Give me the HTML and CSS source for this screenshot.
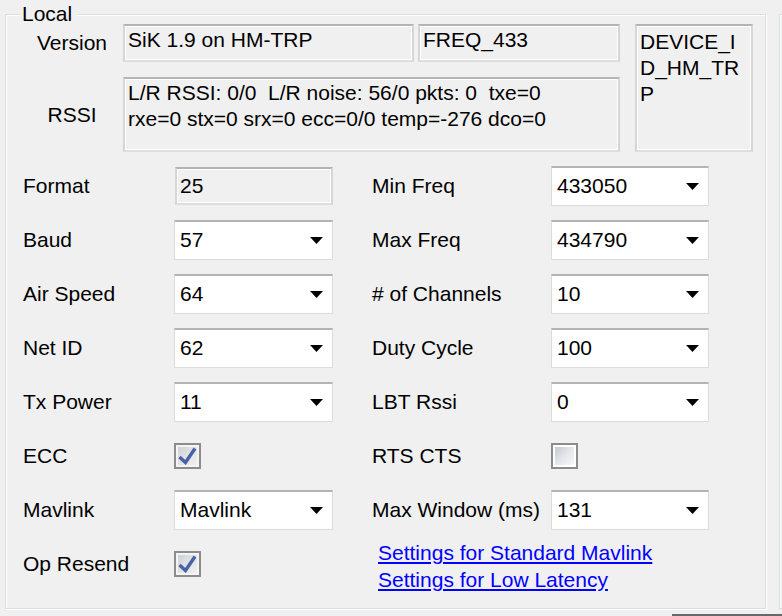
FILE: index.html
```html
<!DOCTYPE html>
<html>
<head>
<meta charset="utf-8">
<link rel="stylesheet" href="styles.css">
</head>
<body>
<div class="window">
  <div class="group local">
    <span class="legend">Local</span>
    <div class="info">
      <div class="info-label">Version</div>
      <div class="tb ver-val">SiK 1.9 on HM-TRP</div>
      <div class="tb freq-val">FREQ_433</div>
      <div class="tb dev-val">DEVICE_I<br>D_HM_TR<br>P</div>
      <div class="info-label">RSSI</div>
      <div class="tb rssi-val">L/R RSSI: 0/0&nbsp; L/R noise: 56/0 pkts: 0&nbsp; txe=0<br>rxe=0 stx=0 srx=0 ecc=0/0 temp=-276 dco=0</div>
    </div>
    <div class="settings">
      <div class="lbl">Format</div>
      <div class="ro">25</div>
      <div class="lbl rlbl">Min Freq</div>
      <div class="combo rc"><span>433050</span><svg class="arr" width="13" height="7" viewBox="0 0 13 7"><polygon points="0,0 13,0 6.5,7" fill="#000"/></svg></div>

      <div class="lbl">Baud</div>
      <div class="combo"><span>57</span><svg class="arr" width="13" height="7" viewBox="0 0 13 7"><polygon points="0,0 13,0 6.5,7" fill="#000"/></svg></div>
      <div class="lbl rlbl">Max Freq</div>
      <div class="combo rc"><span>434790</span><svg class="arr" width="13" height="7" viewBox="0 0 13 7"><polygon points="0,0 13,0 6.5,7" fill="#000"/></svg></div>

      <div class="lbl">Air Speed</div>
      <div class="combo"><span>64</span><svg class="arr" width="13" height="7" viewBox="0 0 13 7"><polygon points="0,0 13,0 6.5,7" fill="#000"/></svg></div>
      <div class="lbl rlbl"># of Channels</div>
      <div class="combo rc"><span>10</span><svg class="arr" width="13" height="7" viewBox="0 0 13 7"><polygon points="0,0 13,0 6.5,7" fill="#000"/></svg></div>

      <div class="lbl">Net ID</div>
      <div class="combo"><span>62</span><svg class="arr" width="13" height="7" viewBox="0 0 13 7"><polygon points="0,0 13,0 6.5,7" fill="#000"/></svg></div>
      <div class="lbl rlbl">Duty Cycle</div>
      <div class="combo rc"><span>100</span><svg class="arr" width="13" height="7" viewBox="0 0 13 7"><polygon points="0,0 13,0 6.5,7" fill="#000"/></svg></div>

      <div class="lbl">Tx Power</div>
      <div class="combo"><span>11</span><svg class="arr" width="13" height="7" viewBox="0 0 13 7"><polygon points="0,0 13,0 6.5,7" fill="#000"/></svg></div>
      <div class="lbl rlbl">LBT Rssi</div>
      <div class="combo rc"><span>0</span><svg class="arr" width="13" height="7" viewBox="0 0 13 7"><polygon points="0,0 13,0 6.5,7" fill="#000"/></svg></div>

      <div class="lbl">ECC</div>
      <div class="chk checked"><svg width="19" height="18" viewBox="0 0 19 18"><polyline points="1.5,10 7.5,15.5 17,1.5" fill="none" stroke="#4862a6" stroke-width="3.4"/></svg></div>
      <div class="lbl rlbl">RTS CTS</div>
      <div class="chk"></div>

      <div class="lbl">Mavlink</div>
      <div class="combo"><span>Mavlink</span><svg class="arr" width="13" height="7" viewBox="0 0 13 7"><polygon points="0,0 13,0 6.5,7" fill="#000"/></svg></div>
      <div class="lbl rlbl">Max Window (ms)</div>
      <div class="combo rc"><span>131</span><svg class="arr" width="13" height="7" viewBox="0 0 13 7"><polygon points="0,0 13,0 6.5,7" fill="#000"/></svg></div>

      <div class="lbl">Op Resend</div>
      <div class="chk checked"><svg width="19" height="18" viewBox="0 0 19 18"><polyline points="1.5,10 7.5,15.5 17,1.5" fill="none" stroke="#4862a6" stroke-width="3.4"/></svg></div>
      <div class="links">
        <a href="#">Settings for Standard Mavlink</a>
        <a href="#">Settings for Low Latency</a>
      </div>
    </div>
  </div>
  <div class="group next"></div>
</div>
<div class="bottom-bar"></div>
</body>
</html>
```

FILE: styles.css
```css
html, body {
  margin: 0;
  padding: 0;
}
body {
  width: 782px;
  height: 616px;
  overflow: hidden;
  background: #f0f0f0;
  font-family: "Liberation Sans", Arial, sans-serif;
  font-size: 21px;
  color: #000;
}
.window {
  display: flex;
  align-items: flex-start;
}
.group {
  box-sizing: border-box;
  margin-top: 14px;
  height: 595px;
  border: 1px solid #d5dfe5;
  box-shadow: inset 1px 1px 0 #fff, 1px 1px 0 #fff;
  position: relative;
  flex: none;
}
.local {
  margin-left: 5px;
  width: 761px;
}
.next {
  margin-left: 13px;
  width: 3px;
  border-right: none;
  box-shadow: inset 1px 1px 0 #fff;
}
.legend {
  position: absolute;
  left: 14px;
  top: -13px;
  padding: 0 5px 0 2px;
  line-height: 24px;
  background: #f0f0f0;
}
.info {
  display: grid;
  grid-template-columns: 95px 295px 217px 118px;
  grid-template-rows: 38px 75px;
  row-gap: 15px;
  margin: 9px 0 0 22px;
}
.info-label {
  width: 88px;
  align-self: center;
  text-align: center;
}
.tb {
  box-sizing: border-box;
  border: 2px solid;
  border-color: #b4b4b4 #d6d6d6 #dedede #d6d6d6;
  box-shadow: inset 1px 1px 0 #fff, inset -1px -1px 0 #fff;
  padding: 1px 3px;
  line-height: 26px;
  background: #f0f0f0;
  white-space: nowrap;
  overflow: hidden;
}
.ver-val { width: 291px; }
.freq-val { width: 202px; }
.dev-val {
  grid-column: 4;
  grid-row: 1 / 3;
  width: 118px;
  height: 128px;
  padding-top: 3px;
}
.rssi-val {
  grid-column: 2 / 4;
  width: 497px;
  height: 75px;
}
.settings {
  display: grid;
  grid-template-columns: 151px 159px 218px 158px;
  grid-auto-rows: 40px;
  row-gap: 14px;
  align-items: center;
  margin: 14px 0 0 17px;
}
.rlbl {
  padding-left: 39px;
}
.ro {
  box-sizing: border-box;
  height: 38px;
  width: 158px;
  border: 2px solid;
  border-color: #b4b4b4 #d6d6d6 #dedede #d6d6d6;
  box-shadow: inset 1px 1px 0 #fff, inset -1px -1px 0 #fff;
  padding: 0 3px;
  line-height: 33px;
  background: #f0f0f0;
  justify-self: end;
}
.combo {
  box-sizing: border-box;
  height: 40px;
  width: 159px;
  background: #fff;
  border: 1px solid #dcdcdc;
  border-top: 2px solid #b4b4b4;
  display: flex;
  align-items: center;
  justify-content: space-between;
  padding: 0 9px 2px 5px;
}
.rc {
  width: 158px;
}
.arr {
  display: block;
  margin-top: 2px;
}
.chk {
  box-sizing: border-box;
  width: 27px;
  height: 26px;
  border: 2px solid #8c8c8c;
  padding: 2px;
  background: #fff;
  background-clip: padding-box;
  position: relative;
}
.chk::before {
  content: "";
  display: block;
  width: 19px;
  height: 18px;
  background: linear-gradient(135deg, #c6cad1 0%, #e4e6ea 50%, #f7f7f7 100%);
}
.chk.checked {
  background-color: #f4f4f4;
}
.chk.checked::before {
  background: linear-gradient(135deg, #cfd1d4 0%, #e2e3e5 50%, #f0f0f0 100%);
}
.chk svg {
  position: absolute;
  left: 2px;
  top: 2px;
}
.links {
  grid-column: 3 / 5;
  align-self: start;
  margin-top: -5px;
  padding-left: 45px;
  line-height: 27px;
  display: flex;
  flex-direction: column;
  align-items: flex-start;
}
.links a {
  color: #0000ff;
  text-decoration: underline;
}
.bottom-bar {
  margin: 5px 0 0 672px;
  height: 4px;
  background: #686868;
}
```
